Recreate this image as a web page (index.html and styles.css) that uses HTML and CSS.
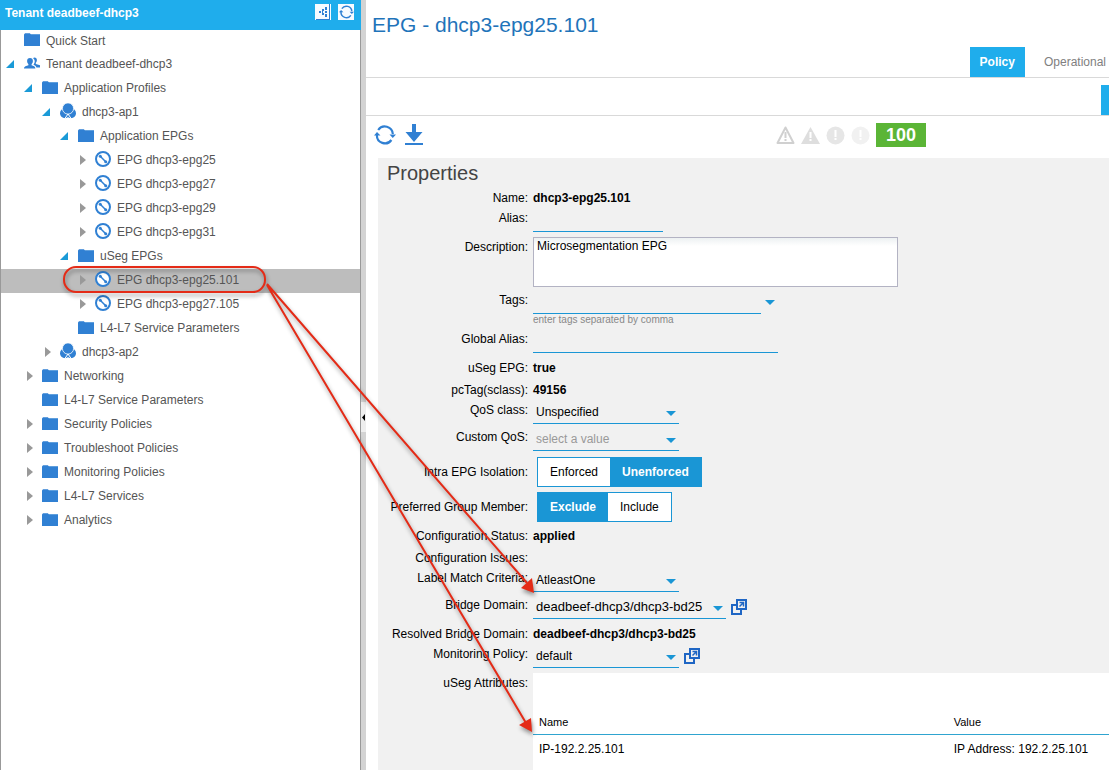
FILE: index.html
```html
<!DOCTYPE html>
<html lang="en">

<head>
    <meta charset="UTF-8">
    <meta name="viewport" content="width=device-width, initial-scale=1.0">
    <title>EPG - dhcp3-epg25.101</title>
    <link rel="stylesheet" href="styles.css">
</head>

<body>
<!-- Shared icons -->
<svg class="icon-defs" aria-hidden="true">
    <symbol id="icon-folder" viewBox="0 0 16 13">
        <path fill="#5f9fdd" d="M6 1h10v2H6z" />
        <path fill="#3080d3" d="M0 1.500 1 .2h5L7 2h9v11H0z" />
    </symbol>
    <symbol id="icon-tenant" viewBox="0 0 16 12">
        <path fill="#3080d3" d="M10.500 0c1.500 0 2.400 1 2.400 2.500 0 1.300-.6 2.200-1.100 2.800v1.200l4.200 1.300V10h-3.600c-.3-1.600-1.500-2.300-3-2.800.9-1.100 1.300-2.200 1.300-3.500C10.700 2.500 10 1.300 9 .7 9.400.2 9.900 0 10.500 0z" />
        <path fill="#3080d3" d="M6 .5c1.900 0 2.900 1.200 2.900 3 0 1.500-.7 2.500-1.300 3.200v1c1.900.6 3.800 1 3.800 3.300H0c0-2.300 2.500-2.700 4.400-3.300v-1C3.800 6 3.100 5 3.100 3.500c0-1.800 1-3 2.900-3z" />
    </symbol>
    <symbol id="icon-app" viewBox="0 0 16 16">
        <g fill="#3080d3">
            <circle cx="5" cy="10.200" r="5" />
            <circle cx="11" cy="10.200" r="5" />
        </g>
        <path stroke="#fff" fill="none" d="m8 11-3.500 5M8 11l3.500 5" />
        <circle cx="8" cy="5.500" r="5.600" fill="#3080d3" stroke="#fff" stroke-width=".8" />
    </symbol>
    <symbol id="icon-epg" viewBox="0 0 16 16">
        <circle cx="8" cy="8" r="7" fill="#fff" stroke="#3080d3" stroke-width="2" />
        <path stroke="#3080d3" stroke-width="1.500" d="m5 5 6 6" />
        <circle cx="5.300" cy="5.300" r="1.500" fill="#3080d3" />
        <circle cx="10.700" cy="10.700" r="1.500" fill="#3080d3" />
    </symbol>
    <symbol id="icon-open" viewBox="0 0 18 12">
        <path fill="#1a9ad7" d="M8 2v8H0z" />
    </symbol>
    <symbol id="icon-closed" viewBox="0 0 18 12">
        <path fill="#999" d="M3 1v10l6-5z" />
    </symbol>
    <symbol id="icon-refresh" viewBox="0 0 22 20">
        <g fill="none" stroke="#3080d3" stroke-width="2.200">
            <path d="M4.200 5A8 8 0 0 1 18.800 9" />
            <path d="M17.400 15A8 8 0 0 1 2.900 10" />
        </g>
        <path fill="#3080d3" d="M0 10.500 3 7l3.500 3.500zM15.500 9.500H22l-3.200 3.500z" />
    </symbol>
    <symbol id="icon-popout" viewBox="0 0 16 16">
        <path fill="none" stroke="#1f66c4" stroke-width="2" d="M5 6H1v9h9v-4M6 1h9v9H6z" />
        <path fill="none" stroke="#1f66c4" stroke-width="1.500" d="M8.500 3.500h4v4M12.500 3.500l-4 4" />
    </symbol>
</svg>

<div class="layout">
    <!-- Navigation -->
    <nav class="sidebar">
        <header class="sidebar-header">
            <h2>Tenant deadbeef-dhcp3</h2>
            <button type="button" class="header-btn" aria-label="Topology">
                <svg width="14" height="16" viewBox="0 0 14 16">
                    <path fill="none" stroke="#3080d3" d="M13.500 0v16M0 15.500h14" />
                    <path fill="#3080d3" d="M3 7h2v2H3zM6 5h2v2H6zM6 9h2v2H6zM6 7h1v2H6zM9 3h2v3H9zM9 7h2v2H9zM9 10h2v3H9z" />
                </svg>
            </button>
            <button type="button" class="header-btn" aria-label="Refresh tree">
                <svg width="15" height="14"><use href="#icon-refresh" /></svg>
            </button>
        </header>
        <ul class="tree">
            <li><a href="#" class="tree-row tree-row-first level-0"><svg class="arrow"></svg><svg class="icon"><use href="#icon-folder" /></svg>Quick Start</a></li>
            <li><a href="#" class="tree-row level-0"><svg class="arrow"><use href="#icon-open" /></svg><svg class="icon"><use href="#icon-tenant" /></svg>Tenant deadbeef-dhcp3</a></li>
            <li><a href="#" class="tree-row level-1"><svg class="arrow"><use href="#icon-open" /></svg><svg class="icon"><use href="#icon-folder" /></svg>Application Profiles</a></li>
            <li><a href="#" class="tree-row level-2"><svg class="arrow"><use href="#icon-open" /></svg><svg class="icon icon-round"><use href="#icon-app" /></svg>dhcp3-ap1</a></li>
            <li><a href="#" class="tree-row level-3"><svg class="arrow"><use href="#icon-open" /></svg><svg class="icon"><use href="#icon-folder" /></svg>Application EPGs</a></li>
            <li><a href="#" class="tree-row level-4"><svg class="arrow"><use href="#icon-closed" /></svg><svg class="icon icon-round"><use href="#icon-epg" /></svg>EPG dhcp3-epg25</a></li>
            <li><a href="#" class="tree-row level-4"><svg class="arrow"><use href="#icon-closed" /></svg><svg class="icon icon-round"><use href="#icon-epg" /></svg>EPG dhcp3-epg27</a></li>
            <li><a href="#" class="tree-row level-4"><svg class="arrow"><use href="#icon-closed" /></svg><svg class="icon icon-round"><use href="#icon-epg" /></svg>EPG dhcp3-epg29</a></li>
            <li><a href="#" class="tree-row level-4"><svg class="arrow"><use href="#icon-closed" /></svg><svg class="icon icon-round"><use href="#icon-epg" /></svg>EPG dhcp3-epg31</a></li>
            <li><a href="#" class="tree-row level-3"><svg class="arrow"><use href="#icon-open" /></svg><svg class="icon"><use href="#icon-folder" /></svg>uSeg EPGs</a></li>
            <li><a href="#" class="tree-row level-4 selected"><svg class="arrow"><use href="#icon-closed" /></svg><svg class="icon icon-round"><use href="#icon-epg" /></svg>EPG dhcp3-epg25.101</a></li>
            <li><a href="#" class="tree-row level-4"><svg class="arrow"><use href="#icon-closed" /></svg><svg class="icon icon-round"><use href="#icon-epg" /></svg>EPG dhcp3-epg27.105</a></li>
            <li><a href="#" class="tree-row level-3"><svg class="arrow"></svg><svg class="icon"><use href="#icon-folder" /></svg>L4-L7 Service Parameters</a></li>
            <li><a href="#" class="tree-row level-2"><svg class="arrow"><use href="#icon-closed" /></svg><svg class="icon icon-round"><use href="#icon-app" /></svg>dhcp3-ap2</a></li>
            <li><a href="#" class="tree-row level-1"><svg class="arrow"><use href="#icon-closed" /></svg><svg class="icon"><use href="#icon-folder" /></svg>Networking</a></li>
            <li><a href="#" class="tree-row level-1"><svg class="arrow"></svg><svg class="icon"><use href="#icon-folder" /></svg>L4-L7 Service Parameters</a></li>
            <li><a href="#" class="tree-row level-1"><svg class="arrow"><use href="#icon-closed" /></svg><svg class="icon"><use href="#icon-folder" /></svg>Security Policies</a></li>
            <li><a href="#" class="tree-row level-1"><svg class="arrow"><use href="#icon-closed" /></svg><svg class="icon"><use href="#icon-folder" /></svg>Troubleshoot Policies</a></li>
            <li><a href="#" class="tree-row level-1"><svg class="arrow"><use href="#icon-closed" /></svg><svg class="icon"><use href="#icon-folder" /></svg>Monitoring Policies</a></li>
            <li><a href="#" class="tree-row level-1"><svg class="arrow"><use href="#icon-closed" /></svg><svg class="icon"><use href="#icon-folder" /></svg>L4-L7 Services</a></li>
            <li><a href="#" class="tree-row level-1"><svg class="arrow"><use href="#icon-closed" /></svg><svg class="icon"><use href="#icon-folder" /></svg>Analytics</a></li>
        </ul>
    </nav>

    <div class="splitter">
        <button type="button" class="splitter-handle" aria-label="Collapse navigation">
            <svg width="5" height="7"><path d="M4 0v7L1 3.500z" /></svg>
        </button>
    </div>

    <!-- Work pane -->
    <main class="content">
        <h1>EPG - dhcp3-epg25.101</h1>
        <div class="tabs">
            <button type="button" class="tab active">Policy</button>
            <button type="button" class="tab">Operational</button>
        </div>
        <div class="subtabs">
            <button type="button" class="subtab" aria-label="General"></button>
        </div>

        <div class="toolbar">
            <button type="button" class="tool-btn" aria-label="Refresh">
                <svg width="22" height="20"><use href="#icon-refresh" /></svg>
            </button>
            <button type="button" class="tool-btn" aria-label="Download">
                <svg width="18" height="22" viewBox="0 0 18 22"><path fill="#3080d3" d="M7 0h4v8h6.500L9 18 .5 8H7zM0 19h18v2H0z" /></svg>
            </button>
            <div class="faults">
                <svg width="19" height="19" viewBox="0 0 19 19">
                    <path fill="none" stroke="#d0d0d0" stroke-width="2" stroke-linejoin="round" d="m9.500 1.500 8 15.500h-16z" />
                    <path fill="#d0d0d0" d="M8.500 6h2v6h-2zM8.500 13h2v2h-2z" />
                </svg>
                <svg width="19" height="19" viewBox="0 0 19 19">
                    <path fill="#dedede" d="m9.500 1 9.500 17H0z" />
                    <path fill="#fff" d="M8.500 6h2v6h-2zM8.500 13h2v2h-2z" />
                </svg>
                <svg width="19" height="19" viewBox="0 0 19 19">
                    <circle cx="9.500" cy="9.500" r="9" fill="#e6e6e6" />
                    <path fill="#fff" d="M8.500 4h2v7h-2zM8.500 12h2v2h-2z" />
                </svg>
                <svg width="19" height="19" viewBox="0 0 19 19">
                    <circle cx="9.500" cy="9.500" r="9" fill="#f1f1f1" />
                    <path fill="#fff" d="M8.500 4h2v7h-2zM8.500 12h2v2h-2z" />
                </svg>
                <span class="score">100</span>
            </div>
        </div>

        <form class="properties">
            <h2>Properties</h2>
            <div class="form-row">
                <span class="form-label">Name:</span>
                <strong>dhcp3-epg25.101</strong>
            </div>
            <div class="form-row field">
                <label class="form-label" for="alias">Alias:</label>
                <input type="text" id="alias" class="form-control short">
            </div>
            <div class="form-row field text">
                <label class="form-label" for="description">Description:</label>
                <textarea id="description">Microsegmentation EPG</textarea>
            </div>
            <div class="form-row field">
                <label class="form-label" for="tags">Tags:</label>
                <div>
                    <div class="tags">
                        <input type="text" id="tags" class="form-control">
                        <button type="button" class="caret" aria-label="Show tags"></button>
                    </div>
                    <small>enter tags separated by comma</small>
                </div>
            </div>
            <div class="form-row field">
                <label class="form-label" for="global-alias">Global Alias:</label>
                <input type="text" id="global-alias" class="form-control long">
            </div>
            <div class="form-row text">
                <span class="form-label">uSeg EPG:</span>
                <strong>true</strong>
            </div>
            <div class="form-row text">
                <span class="form-label">pcTag(sclass):</span>
                <strong>49156</strong>
            </div>
            <div class="form-row field">
                <label class="form-label" for="qos">QoS class:</label>
                <div class="select">
                    <select id="qos" class="form-control"><option>Unspecified</option></select>
                </div>
            </div>
            <div class="form-row field">
                <label class="form-label" for="custom-qos">Custom QoS:</label>
                <div class="select">
                    <select id="custom-qos" class="form-control empty"><option>select a value</option></select>
                </div>
            </div>
            <div class="form-row switch-row">
                <span class="form-label" id="isolation">Intra EPG Isolation:</span>
                <div class="switch" role="group" aria-labelledby="isolation">
                    <button type="button">Enforced</button>
                    <button type="button" class="on">Unenforced</button>
                </div>
            </div>
            <div class="form-row switch-row">
                <span class="form-label" id="group-member">Preferred Group Member:</span>
                <div class="switch" role="group" aria-labelledby="group-member">
                    <button type="button" class="on">Exclude</button>
                    <button type="button">Include</button>
                </div>
            </div>
            <div class="form-row text">
                <span class="form-label">Configuration Status:</span>
                <strong>applied</strong>
            </div>
            <div class="form-row text">
                <span class="form-label">Configuration Issues:</span>
            </div>
            <div class="form-row field">
                <label class="form-label" for="label-match">Label Match Criteria:</label>
                <div class="select">
                    <select id="label-match" class="form-control"><option>AtleastOne</option></select>
                </div>
            </div>
            <div class="form-row field">
                <label class="form-label" for="bridge-domain">Bridge Domain:</label>
                <div class="select wide">
                    <select id="bridge-domain" class="form-control"><option>deadbeef-dhcp3/dhcp3-bd25</option></select>
                </div>
                <a href="#" class="popout" aria-label="Open bridge domain"><svg width="16" height="16"><use href="#icon-popout" /></svg></a>
            </div>
            <div class="form-row text">
                <span class="form-label">Resolved Bridge Domain:</span>
                <strong>deadbeef-dhcp3/dhcp3-bd25</strong>
            </div>
            <div class="form-row field">
                <label class="form-label" for="monitoring">Monitoring Policy:</label>
                <div class="select">
                    <select id="monitoring" class="form-control"><option>default</option></select>
                </div>
                <a href="#" class="popout" aria-label="Open monitoring policy"><svg width="16" height="16"><use href="#icon-popout" /></svg></a>
            </div>
            <div class="form-row text">
                <span class="form-label">uSeg Attributes:</span>
                <div class="table-wrap">
                    <table>
                        <thead>
                            <tr><th class="col-name">Name</th><th>Value</th></tr>
                        </thead>
                        <tbody>
                            <tr><td>IP-192.2.25.101</td><td>IP Address: 192.2.25.101</td></tr>
                        </tbody>
                    </table>
                </div>
            </div>
        </form>
    </main>
</div>

<!-- Callout from the selected EPG to its bridge domain and attributes -->
<svg class="callout" width="560" height="760" aria-hidden="true">
    <g fill="none" stroke="#e42b17" stroke-width="2">
        <rect x="64" y="267" width="201" height="25" rx="12" />
        <path d="m267 284 260 299M267 285l259 438" />
    </g>
    <path fill="#e42b17" d="m534 593-13-5 11-10zM532 732l-13-7 12-7z" />
</svg>
</body>

</html>
```

FILE: styles.css
```css
* {
    box-sizing: border-box;
}

body {
    margin: 0;
    background: #fff;
    color: #000;
    font-family: "Liberation Sans", Arial, sans-serif;
    font-size: 12px;
    overflow: hidden;
}

button,
input,
select,
textarea {
    font-family: inherit;
    font-size: 12px;
    border: none;
    padding: 0;
    margin: 0;
    background: none;
    border-radius: 0;
}

svg {
    display: block;
    flex: none;
}

.icon-defs {
    display: none;
}

.layout {
    display: flex;
    height: 100vh;
}

/* Sidebar */
.sidebar {
    display: flex;
    flex-direction: column;
    flex: 0 0 361px;
}

.sidebar-header {
    display: flex;
    gap: 7px;
    height: 30px;
    padding: 4px 7px 0 5px;
    background: #1fadec;
}

.sidebar-header h2 {
    flex: 1;
    margin: 0;
    color: #fff;
    font-size: 12px;
    line-height: 18px;
}

.header-btn {
    display: flex;
    align-items: center;
    justify-content: center;
    width: 16px;
    height: 16px;
    background: #f7fbff;
}

.tree {
    flex: 1;
    margin: 0;
    padding: 0;
    list-style: none;
    border: 1px solid #999;
    border-width: 0 1px;
}

.tree-row {
    display: flex;
    align-items: center;
    height: 24px;
    padding-bottom: 2px;
    color: #555;
    text-decoration: none;
}

.tree-row-first {
    height: 23px;
}

.level-0 { padding-left: 5px; }
.level-1 { padding-left: 23px; }
.level-2 { padding-left: 41px; }
.level-3 { padding-left: 59px; }
.level-4 { padding-left: 76px; }

.selected {
    background: #bdbdbd;
}

.arrow {
    width: 18px;
    height: 12px;
}

.icon {
    width: 16px;
    height: 13px;
    margin: 0 6px 2px 0;
}

.icon-round {
    height: 16px;
}

/* Splitter */
.splitter {
    display: flex;
    align-items: center;
    flex: 0 0 5px;
    padding-top: 64px;
    background: #d3d3d3;
}

.splitter-handle {
    width: 5px;
    height: 30px;
    background: #eee;
}

/* Work pane */
.content {
    flex: 1;
    min-width: 0;
    overflow: hidden;
}

h1 {
    height: 47px;
    margin: 0;
    padding: 0 6px;
    color: #1f74ba;
    font-size: 21px;
    font-weight: normal;
    line-height: 50px;
}

.tabs {
    display: flex;
    justify-content: flex-end;
    gap: 16px;
    border-bottom: 1px solid #d9d9d9;
}

.tab {
    height: 30px;
    padding: 0 3px;
    color: #808080;
}

.tab.active {
    padding: 0 10px;
    background: #1fadec;
    color: #fff;
    font-weight: bold;
}

.subtabs {
    display: flex;
    justify-content: flex-end;
    padding-top: 7px;
    border-bottom: 1px solid #d9d9d9;
}

.subtab {
    width: 8px;
    height: 30px;
    background: #1fadec;
}

.toolbar {
    display: flex;
    align-items: center;
    gap: 9px;
    height: 42px;
    padding: 0 183px 4px 8px;
}

.faults {
    display: flex;
    align-items: center;
    gap: 6px;
    margin-left: auto;
}

.score {
    width: 50px;
    background: #5bb536;
    color: #fff;
    font-size: 18px;
    font-weight: bold;
    line-height: 24px;
    text-align: center;
}

/* Properties form */
.properties {
    display: flex;
    flex-direction: column;
    margin-left: 12px;
    background: #f1f1f1;
}

.properties h2 {
    margin: 0;
    padding: 0 9px;
    color: #444;
    font-size: 20px;
    font-weight: normal;
    line-height: 30px;
}

.form-row {
    display: flex;
    line-height: 20px;
}

.form-row.text {
    margin-top: 2px;
}

.form-row.field {
    margin-bottom: 3px;
}

.form-label {
    flex: none;
    width: 150px;
    margin-right: 5px;
    text-align: right;
}

.form-control {
    width: 228px;
    height: 24px;
    border-bottom: 1px solid #1a96d5;
}

.form-control.short {
    width: 130px;
}

.form-control.long {
    width: 245px;
}

textarea {
    display: block;
    width: 365px;
    height: 50px;
    padding: 1px 3px;
    border: 1px solid #b3b3c3;
    background: linear-gradient(#edf1f2, #fff 8px);
    resize: none;
}

.tags {
    display: flex;
    gap: 4px;
    height: 24px;
}

.caret {
    align-self: center;
}

.caret::before,
.select::after {
    content: "";
    display: block;
    border: 5px solid transparent;
    border-top-color: #1a96d5;
    border-bottom: none;
}

small {
    display: block;
    color: #888;
    font-size: 10px;
    line-height: 12px;
}

.select {
    position: relative;
    width: 146px;
}

.select.wide {
    width: 193px;
}

.select::after {
    position: absolute;
    top: 11px;
    right: 3px;
    pointer-events: none;
}

select {
    display: block;
    appearance: none;
    padding: 0 16px 0 3px;
    color: #000;
}

.select .form-control {
    width: 100%;
}

.select.wide .form-control {
    font-size: 13px;
}

.select .empty {
    color: #999;
}

.popout {
    align-self: center;
    margin-left: 5px;
}

.switch-row {
    align-items: center;
    margin: 3px 0 2px;
}

.switch {
    display: flex;
    height: 30px;
    margin-left: 4px;
    border: 1px solid #1a96d5;
    background: #fff;
}

.switch button {
    padding: 0 12px;
}

.switch .on {
    background: #1a96d5;
    color: #fff;
    font-weight: bold;
}

.table-wrap {
    flex: 1;
    min-height: 120px;
    background: #fff;
}

table {
    width: 100%;
    border-collapse: collapse;
    table-layout: fixed;
    text-align: left;
}

th {
    height: 61px;
    padding: 0 6px 2px;
    border-bottom: 1px solid #2fa4d0;
    font-size: 11px;
    font-weight: normal;
    vertical-align: bottom;
}

td {
    padding: 4px 6px;
}

.col-name {
    width: 72%;
}

.callout {
    position: absolute;
    top: 0;
    left: 0;
    pointer-events: none;
    filter: drop-shadow(1px 3px 2px rgba(0, 0, 0, 0.4));
}
```
